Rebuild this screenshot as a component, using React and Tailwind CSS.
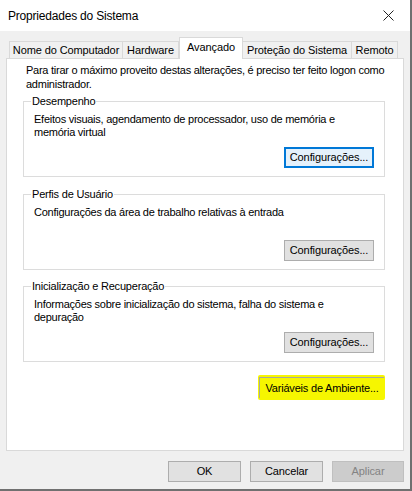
import React from 'react'

const font = { fontFamily: '"Liberation Sans", Arial, sans-serif' }

function WinButton({ children, focused, disabled, className = '' }) {
  let cls = 'h-[21px] flex items-center justify-center text-[11px] tracking-[-0.1px] border '
  if (disabled) cls += 'bg-[#cccccc] border-[#bfbfbf] text-[#838383]'
  else if (focused) cls += 'bg-[#e5f1fb] border-2 border-[#0078d7] text-black'
  else cls += 'bg-[#e1e1e1] border-[#adadad] text-black'
  return <div className={cls + ' ' + className}>{children}</div>
}

function GroupBox({ title, text, focused }) {
  return (
    <fieldset className="border border-[#dcdcdc] ml-[16px] mr-[18px] px-[9px]">
      <legend className="text-[11px] tracking-[-0.2px] px-[1px] ml-[-2px] leading-[14px]">{title}</legend>
      <div className="h-[68px] flex flex-col">
        <p className="text-[11px] tracking-[-0.25px] leading-[13px] mt-[5px] pl-[1px]">{text}</p>
        <div className="flex-1" />
        <div className="flex justify-end pb-[8px] pr-[1px]">
          <WinButton focused={focused} className="w-[90px]">Configurações...</WinButton>
        </div>
      </div>
    </fieldset>
  )
}

export default function App() {
  const tabs = ['Nome do Computador', 'Hardware', 'Avançado', 'Proteção do Sistema', 'Remoto']
  const widths = ['w-[114px]', 'w-[56px]', 'w-[64px]', 'w-[109px]', 'w-[46px]']
  return (
    <div style={font} className="w-[412px] h-[491px] bg-[#f0f0f0] border-r-2 border-b-2 border-[#707070] flex flex-col text-black overflow-hidden">
      <div className="h-[31px] bg-white flex items-center justify-between pl-[8px] pr-[16px] shrink-0">
        <span className="text-[12px] tracking-[-0.2px]">Propriedades do Sistema</span>
        <svg width="11" height="11" viewBox="0 0 11 11">
          <path d="M0.5 0.5 L10.5 10.5 M10.5 0.5 L0.5 10.5" stroke="#222" strokeWidth="1" />
        </svg>
      </div>

      <div className="px-[6px] pt-[6px]">
        <div className="flex items-end pl-[3px] h-[21px]">
          {tabs.map((t, i) => {
            const sel = i === 2
            return (
              <div
                key={t}
                className={
                  'text-[11px] tracking-[-0.1px] flex items-center justify-center border-t border-l border-r border-[#d9d9d9] ' +
                  widths[i] + ' ' +
                  (sel ? 'bg-white h-[22px] mb-[-1px] relative z-10 pb-[3px]' : 'bg-[#f0f0f0] h-[17px] border-l-0 first:border-l') +
                  (i === 3 ? ' border-l-0' : '')
                }
              >
                {t}
              </div>
            )
          })}
        </div>

        <div className="bg-white border border-[#d9d9d9] h-[393px] flex flex-col">
          <p className="text-[11px] tracking-[-0.25px] leading-[14px] pl-[19px] pr-[10px] pt-[4px]">
            Para tirar o máximo proveito destas alterações, é preciso ter feito logon como administrador.
          </p>
          <div className="h-[3px]" />
          <GroupBox
            title="Desempenho"
            text="Efeitos visuais, agendamento de processador, uso de memória e memória virtual"
            focused
          />
          <div className="h-[10px]" />
          <GroupBox
            title="Perfis de Usuário"
            text="Configurações da área de trabalho relativas à entrada"
          />
          <div className="h-[9px]" />
          <GroupBox
            title="Inicialização e Recuperação"
            text="Informações sobre inicialização do sistema, falha do sistema e depuração"
          />
          <div className="flex justify-end mr-[18px] mt-[13px]">
            <div className="bg-[#f6f600] px-[1px] py-[2px] rounded-[2px]">
              <div className="h-[21px] w-[125px] border-t border-l border-[#a8a8a0] flex items-center justify-center text-[11px] tracking-[-0.2px]">
                Variáveis de Ambiente...
              </div>
            </div>
          </div>
        </div>

        <div className="flex justify-end gap-[9px] mt-[10px]">
          <WinButton className="w-[73px]">OK</WinButton>
          <WinButton className="w-[73px]">Cancelar</WinButton>
          <WinButton disabled className="w-[72px]">Aplicar</WinButton>
        </div>
      </div>
    </div>
  )
}
